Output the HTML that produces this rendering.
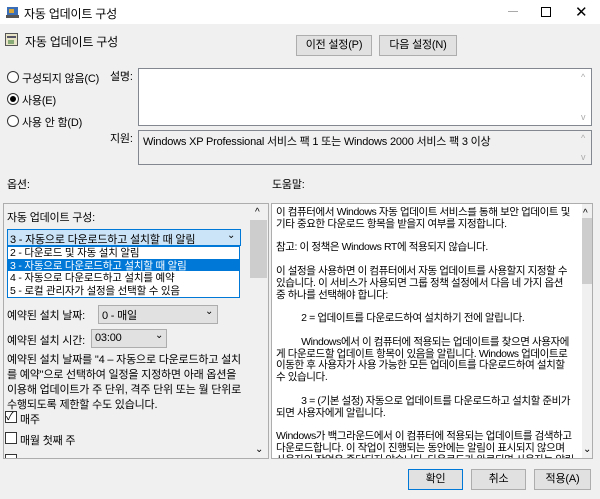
<!DOCTYPE html>
<html><head><meta charset="utf-8"><style>
*{margin:0;padding:0;box-sizing:border-box}
body{width:600px;height:499px;background:#f0f0f0;font-family:"Liberation Sans","Noto Sans CJK KR","NanumGothic",sans-serif;font-size:11px;letter-spacing:-0.2px;color:#000;position:relative;overflow:hidden}
.a{position:absolute;white-space:nowrap}
.btn{position:absolute;background:#e1e1e1;border:1px solid #adadad;text-align:center;font-size:11px}
.rad{position:absolute;width:12px;height:12px;border:1px solid #333;border-radius:50%;background:#fff}
.box{position:absolute;border:1px solid #828790;background:#fff}
.sb{position:absolute;background:#f0f0f0}
.chk{position:absolute;width:12px;height:12px;border:1px solid #333;background:#fff}
.ar{position:absolute;font-size:9px;color:#aaa}
</style></head><body>
<div class="a" style="left:0;top:0;width:600px;height:24px;background:#fff"></div>
<svg class="a" style="left:6px;top:5px" width="14" height="14"><rect x="1" y="2" width="11" height="8" fill="#3a6fb7"/><rect x="0" y="10" width="13" height="3" fill="#555"/><rect x="3" y="4" width="5" height="4" fill="#d9a63a"/></svg>
<div class="a" style="left:24px;top:5px;font-size:12px">자동 업데이트 구성</div>
<div class="a" style="left:508px;top:11px;width:10px;height:1px;background:#aaa"></div>
<div class="a" style="left:541px;top:7px;width:10px;height:10px;border:1px solid #000"></div>
<div class="a" style="left:575px;top:3px;font-size:15px">✕</div>
<svg class="a" style="left:5px;top:33px" width="14" height="14"><rect x="0.5" y="0.5" width="12" height="12" fill="#e8e4c8" stroke="#555"/><rect x="2" y="3" width="9" height="2" fill="#556"/><rect x="3" y="7" width="6" height="4" fill="#8a7"/></svg>
<div class="a" style="left:25px;top:33px;font-size:12px">자동 업데이트 구성</div>
<div class="btn" style="left:296px;top:35px;width:76px;height:21px;line-height:19px">이전 설정(P)</div>
<div class="btn" style="left:379px;top:35px;width:78px;height:21px;line-height:19px">다음 설정(N)</div>
<div class="rad" style="left:7px;top:71px"></div><div class="a" style="left:22px;top:70px">구성되지 않음(C)</div>
<div class="rad" style="left:7px;top:93px"></div><div class="a" style="left:10px;top:96px;width:6px;height:6px;border-radius:50%;background:#000"></div><div class="a" style="left:22px;top:92px">사용(E)</div>
<div class="rad" style="left:7px;top:115px"></div><div class="a" style="left:22px;top:114px">사용 안 함(D)</div>
<div class="a" style="left:110px;top:68px">설명:</div>
<div class="box" style="left:138px;top:68px;width:454px;height:58px"></div>
<div class="ar" style="left:581px;top:72px">^</div><div class="ar" style="left:581px;top:112px">v</div>
<div class="a" style="left:110px;top:130px">지원:</div>
<div class="box" style="left:138px;top:130px;width:454px;height:35px;background:#f0f0f0"></div>
<div class="a" style="left:143px;top:133px">Windows XP Professional 서비스 팩 1 또는 Windows 2000 서비스 팩 3 이상</div>
<div class="ar" style="left:581px;top:133px">^</div><div class="ar" style="left:581px;top:152px">v</div>
<div class="a" style="left:7px;top:176px">옵션:</div>
<div class="a" style="left:272px;top:176px">도움말:</div>
<div class="box" style="left:3px;top:203px;width:266px;height:256px;background:#f0f0f0;border-color:#adadad;overflow:hidden">
<div class="chk" style="left:1px;top:250px"></div></div>
<div class="sb" style="left:250px;top:204px;width:18px;height:254px"></div>
<div class="a" style="left:250px;top:220px;width:17px;height:58px;background:#cdcdcd"></div>
<div class="a" style="left:255px;top:207px;font-size:10px">^</div><div class="a" style="left:255px;top:444px;font-size:10px">⌄</div>
<div class="a" style="left:7px;top:209px">자동 업데이트 구성:</div>
<div class="a" style="left:7px;top:229px;width:234px;height:17px;background:#cce4f7;border:1px solid #0078d7"></div>
<div class="a" style="left:10px;top:231px">3 - 자동으로 다운로드하고 설치할 때 알림</div>
<div class="a" style="left:227px;top:230px;font-size:10px">⌄</div>
<div class="a" style="left:7px;top:246px;width:233px;height:52px;background:#fff;border:1px solid #0078d7"></div>
<div class="a" style="left:8px;top:259px;width:231px;height:12px;background:#0078d7"></div>
<div class="a" style="left:10px;top:247px;line-height:12.5px;font-size:10.5px">2 - 다운로드 및 자동 설치 알림<br><span style="color:#fff">3 - 자동으로 다운로드하고 설치할 때 알림</span><br>4 - 자동으로 다운로드하고 설치를 예약<br>5 - 로컬 관리자가 설정을 선택할 수 있음</div>
<div class="a" style="left:7px;top:307px">예약된 설치 날짜:</div>
<div class="a" style="left:98px;top:305px;width:120px;height:19px;background:#e1e1e1;border:1px solid #adadad"></div>
<div class="a" style="left:102px;top:307px">0 - 매일</div><div class="a" style="left:205px;top:306px;font-size:10px">⌄</div>
<div class="a" style="left:7px;top:332px">예약된 설치 시간:</div>
<div class="a" style="left:91px;top:329px;width:76px;height:19px;background:#e1e1e1;border:1px solid #adadad"></div>
<div class="a" style="left:95px;top:332px">03:00</div><div class="a" style="left:155px;top:330px;font-size:10px">⌄</div>
<div class="a" style="left:7px;top:353px;line-height:15px">예약된 설치 날짜를 "4 – 자동으로 다운로드하고 설치<br>를 예약"으로 선택하여 일정을 지정하면 아래 옵션을<br>이용해 업데이트가 주 단위, 격주 단위 또는 월 단위로<br>수행되도록 제한할 수도 있습니다.</div>
<div class="chk" style="left:5px;top:411px"></div><div class="a" style="left:6px;top:408px;font-size:11px">✓</div><div class="a" style="left:20px;top:411px">매주</div>
<div class="chk" style="left:5px;top:432px"></div><div class="a" style="left:20px;top:432px">매월 첫째 주</div>
<div class="box" style="left:271px;top:203px;width:322px;height:256px;border-color:#adadad"></div>
<div class="sb" style="left:582px;top:204px;width:10px;height:254px"></div>
<div class="a" style="left:582px;top:218px;width:10px;height:66px;background:#cdcdcd"></div>
<div class="a" style="left:583px;top:208px;font-size:10px">^</div><div class="a" style="left:583px;top:444px;font-size:10px">⌄</div>
<div class="a" style="left:276px;top:207px;width:305px;height:251px;overflow:hidden;line-height:11.8px;font-size:10.5px;letter-spacing:-0.4px">이 컴퓨터에서 Windows 자동 업데이트 서비스를 통해 보안 업데이트 및<br>기타 중요한 다운로드 항목을 받을지 여부를 지정합니다.<br><br>참고: 이 정책은 Windows RT에 적용되지 않습니다.<br><br>이 설정을 사용하면 이 컴퓨터에서 자동 업데이트를 사용할지 지정할 수<br>있습니다. 이 서비스가 사용되면 그룹 정책 설정에서 다음 네 가지 옵션<br>중 하나를 선택해야 합니다:<br><br>&nbsp;&nbsp;&nbsp;&nbsp;&nbsp;&nbsp;&nbsp;&nbsp;&nbsp;&nbsp;2 = 업데이트를 다운로드하여 설치하기 전에 알립니다.<br><br>&nbsp;&nbsp;&nbsp;&nbsp;&nbsp;&nbsp;&nbsp;&nbsp;&nbsp;&nbsp;Windows에서 이 컴퓨터에 적용되는 업데이트를 찾으면 사용자에<br>게 다운로드할 업데이트 항목이 있음을 알립니다. Windows 업데이트로<br>이동한 후 사용자가 사용 가능한 모든 업데이트를 다운로드하여 설치할<br>수 있습니다.<br><br>&nbsp;&nbsp;&nbsp;&nbsp;&nbsp;&nbsp;&nbsp;&nbsp;&nbsp;&nbsp;3 = (기본 설정) 자동으로 업데이트를 다운로드하고 설치할 준비가<br>되면 사용자에게 알립니다.<br><br>Windows가 백그라운드에서 이 컴퓨터에 적용되는 업데이트를 검색하고<br>다운로드합니다. 이 작업이 진행되는 동안에는 알림이 표시되지 않으며<br>사용자의 작업은 중단되지 않습니다. 다운로드가 완료되면 사용자는 알림</div>
<div class="btn" style="left:408px;top:469px;width:55px;height:21px;line-height:19px;border:1px solid #0078d7">확인</div>
<div class="btn" style="left:471px;top:469px;width:55px;height:21px;line-height:19px">취소</div>
<div class="btn" style="left:534px;top:469px;width:57px;height:21px;line-height:19px">적용(A)</div>
</body></html>
